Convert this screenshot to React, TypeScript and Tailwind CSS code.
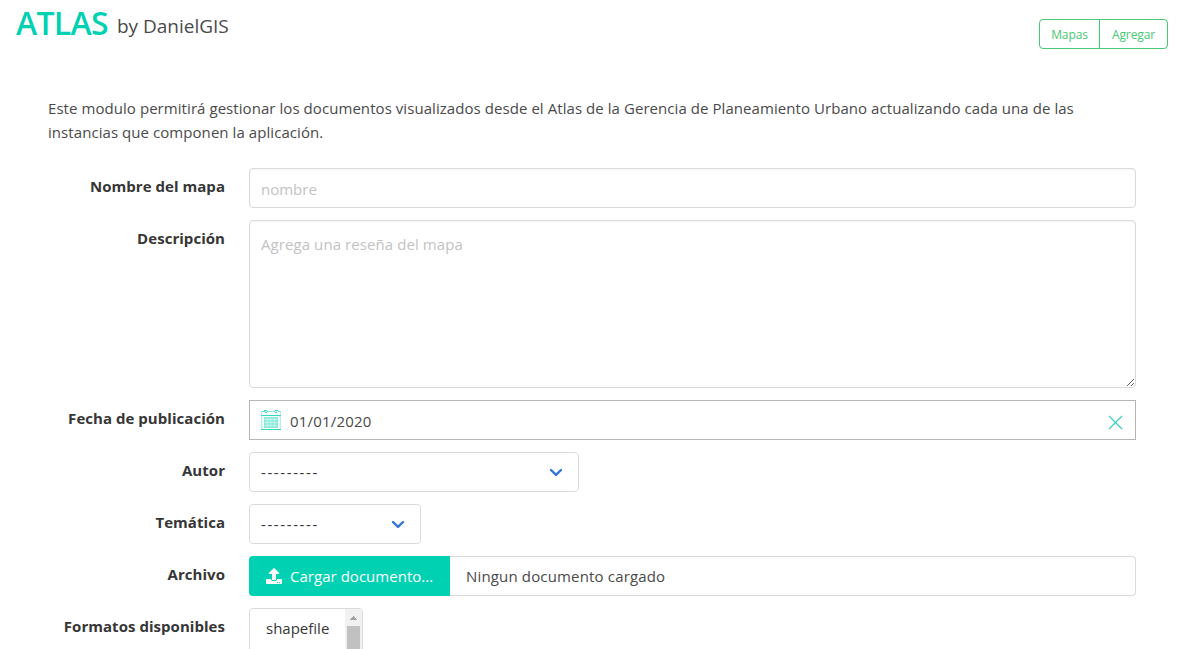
import type { ReactNode } from "react";

function Row({ label, children }: { label: string; children: ReactNode }) {
  return (
    <div className="flex gap-6">
      <label className="w-[177px] shrink-0 whitespace-nowrap pt-[6px] text-right text-[15px] font-bold leading-6 tracking-[0.04px] text-[#363636]">
        {label}
      </label>
      <div className="min-w-0 flex-1">{children}</div>
    </div>
  );
}

function CalendarIcon() {
  return (
    <svg width="20" height="20" viewBox="0 0 20 20" fill="none" shapeRendering="crispEdges">
      <path d="M0.5 2v17M19.5 2v17" stroke="#b3f1e8" />
      <path d="M1.500 6v13M18.500 6v13" stroke="#e0faf6" />
      <path d="M0 1.500h3M6 1.500h8M17 1.500h3" stroke="#8cebdb" />
      <path d="M0 5.500h20M0 19.500h20" stroke="#33dac1" />
      <path d="M3 0.500h3M14 0.500h3M4 2.500h2M14 2.500h2" stroke="#33dac1" />
      <path d="M2 1.500h2M6 1.500h1M13 1.500h1M17 1.500h1" stroke="#33dac1" />
      <rect x="3" y="7" width="14" height="11" fill="#8cebdb" />
      <path d="M4 9.500h12M4 12.500h12M4 15.500h12M6.500 8v9M9.500 8v9M13.500 8v9" stroke="#bdf4eb" />
    </svg>
  );
}

function Select({ width }: { width: string }) {
  return (
    <div className={`flex h-10 items-center justify-between rounded border border-[#dbdbdb] pl-[11px] pr-[15px] ${width}`}>
      <span className="text-[15px] tracking-[1.6px] text-[#363636]">---------</span>
      <svg width="14" height="9" viewBox="0 0 14 9" fill="none" stroke="#3273dc" strokeWidth="2.4" strokeLinecap="round" strokeLinejoin="round">
        <path d="M2 2l5 4.800L12 2" />
      </svg>
    </div>
  );
}

export default function App() {
  return (
    <div className="h-[649px] overflow-hidden bg-white font-['Open_Sans',sans-serif] text-[15px] text-[#4a4a4a]">
      <header className="flex h-[60px] items-start justify-between pl-4 pr-5">
        <h1 className="flex items-start gap-[10px] whitespace-nowrap">
          <span className="text-[32px] font-semibold leading-[46px] tracking-[-0.7px] text-[#00d1b2]">ATLAS</span>
          <span className="-ml-px text-[19px] leading-[52px]">by DanielGIS</span>
        </h1>
        <nav className="mt-[19px] flex h-[30px] w-[129px] rounded-sm border border-[#48c774] text-[12px] tracking-[-0.1px] text-[#48c774]">
          <a className="flex w-[60px] items-center justify-center border-r border-[#48c774] pt-0.5">Mapas</a>
          <a className="flex flex-1 items-center justify-center pt-0.5">Agregar</a>
        </nav>
      </header>
      <main className="pl-12 pr-[52px] pt-9">
        <p className="whitespace-nowrap leading-6 tracking-[0.063px]">
          <span>Este modulo permitirá gestionar los documentos visualizados desde el Atlas de la Gerencia de Planeamiento Urbano actualizando cada una de las</span>
          <br />
          <span>instancias que componen la aplicación.</span>
        </p>
        <form className="mt-6 flex flex-col gap-3">
          <Row label="Nombre del mapa">
            <input
              placeholder="nombre"
              className="block h-10 w-full rounded border border-[#dbdbdb] px-[11px] pt-0.5 shadow-[inset_0_1px_2px_rgba(10,10,10,0.05)] placeholder:text-[#c3c3c3]"
            />
          </Row>
          <Row label="Descripción">
            <textarea
              placeholder="Agrega una reseña del mapa"
              className="block h-[168px] w-full resize-y rounded border border-[#dbdbdb] px-[11px] py-[11px] leading-6 tracking-[0.08px] shadow-[inset_0_1px_2px_rgba(10,10,10,0.05)] placeholder:text-[#c3c3c3]"
            />
          </Row>
          <Row label="Fecha de publicación">
            <div className="flex h-10 items-center border border-[#b5b5b5] pl-[11px] pr-3">
              <CalendarIcon />
              <span className="ml-[9px] flex-1 pt-0.5 tracking-[0.2px]">01/01/2020</span>
              <svg width="15" height="15" viewBox="0 0 15 15" stroke="#35cdbd" strokeWidth="1.1" className="mt-1">
                <path d="M1 1l13 13M14 1L1 14" />
              </svg>
            </div>
          </Row>
          <Row label="Autor">
            <Select width="w-[330px]" />
          </Row>
          <Row label="Temática">
            <Select width="w-[172px]" />
          </Row>
          <Row label="Archivo">
            <div className="flex h-10 whitespace-nowrap">
              <div className="flex w-[201px] items-center rounded-l bg-[#00d1b2] pl-[17px] text-white">
                <svg width="16" height="16" viewBox="0 0 512 512" fill="currentColor" className="mr-2">
                  <path d="M296 384h-80c-13.300 0-24-10.700-24-24V192h-87.700c-17.800 0-26.700-21.500-14.100-34.100L242.300 5.700c7.500-7.500 19.800-7.500 27.300 0l152.200 152.200c12.600 12.600 3.700 34.100-14.100 34.100H320v168c0 13.300-10.700 24-24 24zm216-8v112c0 13.300-10.700 24-24 24H24c-13.300 0-24-10.700-24-24V376c0-13.300 10.700-24 24-24h136v8c0 30.900 25.100 56 56 56h80c30.900 0 56-25.100 56-56v-8h136c13.300 0 24 10.700 24 24zm-124 88c0-11-9-20-20-20s-20 9-20 20 9 20 20 20 20-9 20-20zm64 0c0-11-9-20-20-20s-20 9-20 20 9 20 20 20 20-9 20-20z" />
                </svg>
                <span className="tracking-[0.03px]">Cargar documento...</span>
              </div>
              <div className="flex flex-1 items-center rounded-r border border-l-0 border-[#dbdbdb] pl-4">
                <span className="tracking-[0.16px]">Ningun documento cargado</span>
              </div>
            </div>
          </Row>
          <Row label="Formatos disponibles">
            <div className="flex h-[120px] w-[114px] justify-between overflow-hidden rounded border border-[#dbdbdb]">
              <span className="pl-4 pt-[7px] leading-6 text-[#363636]">shapefile</span>
              <div className="flex w-[17px] flex-col items-center bg-[#f1f1f1]">
                <svg width="17" height="17" viewBox="0 0 17 17" fill="#a3a3a3" shapeRendering="crispEdges">
                  <path d="M8 7h1v1h1v1h1v1h1v1H5v-1h1V9h1V8h1z" />
                </svg>
                <div className="w-[13px] flex-1 bg-[#c1c1c1]" />
              </div>
            </div>
          </Row>
        </form>
      </main>
    </div>
  );
}
